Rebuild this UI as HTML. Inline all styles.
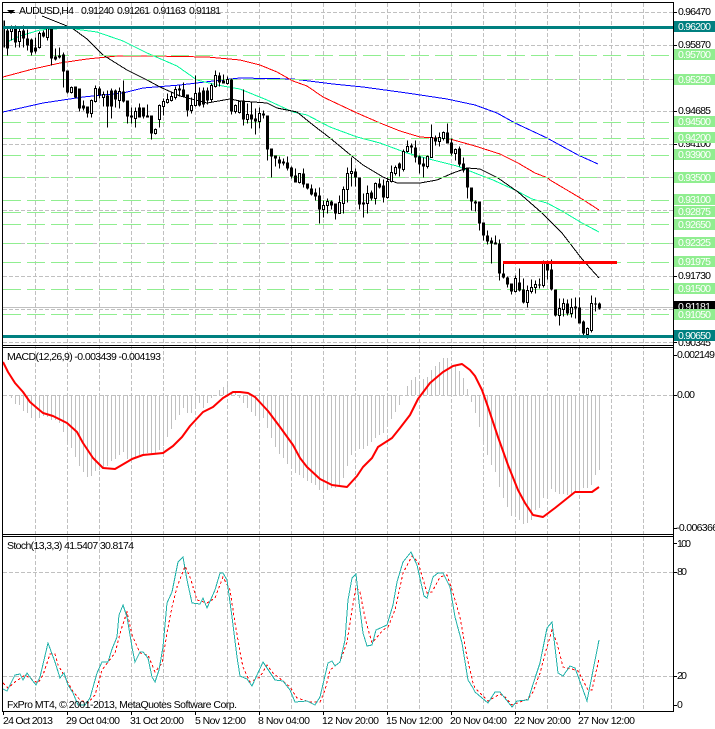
<!DOCTYPE html>
<html><head><meta charset="utf-8"><title>AUDUSD,H4</title>
<style>
html,body{margin:0;padding:0;background:#fff;width:715px;height:729px;overflow:hidden}
svg{display:block}
text{font-family:"Liberation Sans",sans-serif;font-size:10.5px;fill:#000}
.w{fill:#fff}
</style></head><body>
<svg width="715" height="729" viewBox="0 0 715 729" xmlns="http://www.w3.org/2000/svg">
<defs>
<clipPath id="m"><rect x="3" y="3" width="670" height="342"/></clipPath>
<clipPath id="c"><rect x="3" y="348" width="670" height="186"/></clipPath>
<clipPath id="s"><rect x="3" y="537" width="670" height="174"/></clipPath>
</defs>
<rect width="715" height="729" fill="#fff"/>
<!-- grid -->
<g stroke="#c0c0c0" stroke-width="1" stroke-dasharray="4 2" fill="none" shape-rendering="crispEdges">
<path d="M35.5 3V711M67.5 3V711M99.5 3V711M131.5 3V711M163.5 3V711M195.5 3V711M227.5 3V711M259.5 3V711M291.5 3V711M323.5 3V711M355.5 3V711M387.5 3V711M419.5 3V711M451.5 3V711M483.5 3V711M515.5 3V711M547.5 3V711M579.5 3V711M611.5 3V711M643.5 3V711"/>
<path d="M3 12.5H673M3 45.5H673M3 79.5H673M3 111.5H673M3 144.5H673M3 177.5H673M3 210.5H673M3 243.5H673M3 276.5H673M3 309.5H673M3 342.5H673M3 395.5H673M3 572.5H673M3 676.5H673"/>
</g>
<path d="M3 307.5H673" stroke="#c0c0c0" fill="none" shape-rendering="crispEdges"/>
<!-- moving averages -->
<g clip-path="url(#m)" fill="none" stroke-width="1" shape-rendering="crispEdges">
<polyline stroke="#0000ff" points="3,112 43,103 83,97 123,93 143,88 180,85 213,81 240,78 293,79 333,84 363,87 407,93 447,99 475,105 497,113 515,123 547,138 578,155 598,164"/>
<polyline stroke="#ff0000" points="3,77 33,69 60,63 87,59 117,56 153,56 207,57 240,60 260,65 277,72 293,81 307,86 323,97 340,105 357,113 380,123 400,131 420,137 450,139 475,146 500,154 518,163 535,173 548,178 550,180 582,199 599,210"/>
<polyline stroke="#00fa9a" points="7,42 20,36 40,30 67,28 97,32 123,41 147,53 177,66 197,80 217,85 240,89 267,100 293,112 307,115 330,127 357,137 380,143 407,153 433,160 457,166 480,175 493,180 515,190 532,199 547,203 562,211 582,223 599,232"/>
<polyline stroke="#000" points="42,16 57,22 72,28 87,39 103,55 127,70 147,80 160,87 180,96 207,103 230,99 240,101 267,103 277,108 297,112 313,125 330,138 353,157 363,165 383,177 397,183 420,183 437,180 453,173 467,168 480,169 498,178 518,192 542,213 562,233 582,259 599,278"/>
</g>
<!-- horizontal levels -->
<path d="M3 55.5H673M3 79.5H673M3 122.5H673M3 138.5H673M3 155.5H673M3 177.5H673M3 200.5H673M3 212.5H673M3 224.5H673M3 243.5H673M3 262.5H673M3 289.5H673M3 314.5H673" stroke="#90ee90" stroke-dasharray="18 6" fill="none" shape-rendering="crispEdges"/>
<!-- candles -->
<g clip-path="url(#m)" transform="translate(.5 .5)" shape-rendering="crispEdges">
<path fill="none" stroke="#000" d="M3 20V47M7 28V55M11 25V40M15 25V47M19 26V47M23 25V47M27 29V50M31 38V55M35 37V53M39 31V48M43 30V37M47 27V40M51 27V65M55 48V60M59 47V58M63 52V87M67 70V93M71 86V93M75 86V98M79 88V111M83 100V110M87 106V117M91 99V117M95 85V102M99 86V98M103 91V106M107 90V127M111 88V118M115 89V107M119 87V108M123 80V102M127 100V123M131 107V123M135 107V127M139 103V117M143 107V118M147 104V117M151 115V139M155 128V134M159 104V127M163 98V115M167 93V103M171 91V101M175 86V99M179 85V96M183 82V97M187 94V116M191 97V113M195 75V106M199 87V106M203 87V107M207 87V104M211 83V101M215 70V87M219 72V86M223 74V83M227 76V84M231 78V114M235 104V113M239 100V113M243 89V125M247 103V123M251 101V128M255 108V134M259 107V128M263 110V118M267 115V160M271 148V177M275 155V166M279 156V168M283 158V165M287 156V170M291 166V178M295 168V182M299 173V183M303 168V187M307 183V189M311 184V195M315 188V200M319 187V223M323 200V217M327 198V213M331 200V209M335 203V219M339 195V213M343 186V213M347 167V202M351 157V186M355 168V186M359 177V209M363 193V217M367 185V213M371 190V200M375 182V204M379 178V188M383 179V202M387 177V198M391 165V182M395 165V175M399 162V176M403 149V171M407 140V152M411 143V153M415 140V162M419 155V173M423 157V177M427 155V168M431 124V157M435 135V145M439 132V146M443 131V140M447 123V143M451 138V155M455 148V160M459 146V166M463 157V172M467 167V198M471 187V210M475 200V211M479 201V230M483 222V240M487 230V244M491 237V263M495 235V244M499 239V280M503 262V278M507 276V287M511 283V294M515 275V292M519 268V291M523 278V303M527 285V307M531 279V293M535 280V293M539 278V288M543 260V287M547 260V279M551 259V290M555 289V316M559 298V325M563 298V316M567 299V315M571 298V317M575 297V318M579 297V323M583 320V337M587 327V338M591 295V332M595 297V311M599 302V309"/>
<path fill="none" stroke="#000" stroke-width="3" d="M3 20V47M7 30V48M15 27V42M23 30V38M27 38V45M31 39V52M35 47V51M43 32V36M51 28V58M55 56V59M59 55V57M63 54V71M67 70V92M75 86V97M79 88V108M83 105V108M87 106V113M99 88V95M107 95V106M111 90V106M115 90V99M123 91V101M127 100V116M131 115V117M139 107V117M143 107V116M147 115V117M151 115V133M179 88V90M183 89V96M187 94V110M199 92V105M203 90V104M207 90V100M219 75V82M223 80V83M231 79V111M243 100V119M251 114V119M255 118V121M263 113V115M267 115V149M271 148V156M275 155V158M279 159V163M283 161V163M287 162V168M291 167V176M295 175V182M303 173V184M307 183V188M311 188V194M315 192V196M319 195V209M331 201V205M335 203V213M355 171V177M359 177V204M363 202V204M371 192V198M379 183V187M383 185V197M399 163V168M411 145V147M415 147V157M419 156V164M423 163V166M435 137V141M447 132V143M451 142V153M459 148V164M463 163V170M467 168V187M471 187V201M475 201V203M479 201V223M483 222V235M487 235V241M491 240V243M495 242V244M499 243V273M503 273V277M507 277V284M511 283V291M519 282V290M523 289V302M539 284V285M547 263V270M551 269V289M555 289V315M567 303V313M575 306V308M579 307V323M583 321V333M595 303V304M599 303V308"/>
<path fill="#fff" stroke="#000" d="M10 26h2v5h-2zM18 31h2v10h-2zM38 33h2v14h-2zM46 28h2v9h-2zM70 87h2v5h-2zM90 100h2v13h-2zM94 88h2v13h-2zM102 94h2v3h-2zM118 91h2v9h-2zM134 111h2v7h-2zM154 129h2v4h-2zM158 105h2v14h-2zM162 101h2v5h-2zM166 99h2v3h-2zM170 96h2v4h-2zM174 89h2v8h-2zM190 105h2v5h-2zM194 93h2v12h-2zM210 85h2v14h-2zM214 75h2v11h-2zM226 79h2v4h-2zM234 105h2v6h-2zM238 101h2v11h-2zM246 114h2v5h-2zM258 113h2v8h-2zM298 173h2v9h-2zM322 205h2v4h-2zM326 201h2v4h-2zM338 202h2v11h-2zM342 189h2v14h-2zM346 173h2v16h-2zM350 171h2v2h-2zM366 193h2v10h-2zM374 183h2v15h-2zM386 181h2v16h-2zM390 172h2v9h-2zM394 167h2v6h-2zM402 151h2v18h-2zM406 146h2v5h-2zM426 156h2v10h-2zM430 137h2v20h-2zM438 137h2v4h-2zM442 132h2v6h-2zM454 149h2v4h-2zM514 278h2v13h-2zM526 290h2v12h-2zM530 287h2v4h-2zM534 284h2v3h-2zM542 263h2v22h-2zM558 308h2v7h-2zM562 303h2v6h-2zM570 307h2v6h-2zM586 328h2v6h-2zM590 303h2v27h-2z"/>
</g>
<!-- thick lines -->
<g shape-rendering="crispEdges">
<rect x="3" y="26" width="670" height="3" fill="#008080"/>
<rect x="3" y="335" width="670" height="3" fill="#008080"/>
<rect x="503" y="261" width="114" height="3" fill="#ff0000"/>
</g>
<!-- MACD -->
<g clip-path="url(#c)" transform="translate(.5 0)" shape-rendering="crispEdges">
<path fill="none" stroke="#c0c0c0" d="M11 395V398M15 395V404M19 395V405M23 395V411M27 395V413M31 395V418M35 395V417M39 395V418M43 395V416M47 395V417M51 395V420M55 395V420M59 395V423M63 395V432M67 395V442M71 395V448M75 395V457M79 395V466M83 395V472M87 395V477M91 395V476M95 395V471M99 395V470M103 395V469M107 395V466M111 395V461M115 395V459M119 395V455M123 395V452M127 395V459M131 395V458M135 395V457M139 395V455M143 395V454M147 395V453M151 395V454M155 395V453M159 395V450M163 395V446M167 395V437M171 395V429M175 395V420M179 395V415M183 395V408M187 395V413M191 395V413M195 395V408M199 395V403M203 395V408M207 395V403M211 395V398M219 395V390M223 395V387M227 395V381M231 395V392M235 395V393M239 395V398M243 395V403M247 395V408M251 395V412M255 395V416M259 395V418M263 395V418M267 395V428M271 395V438M275 395V447M279 395V454M283 395V458M287 395V464M291 395V468M295 395V473M299 395V475M303 395V478M307 395V481M311 395V483M315 395V485M319 395V490M323 395V490M327 395V490M331 395V488M335 395V488M339 395V487M343 395V478M347 395V466M351 395V455M355 395V449M359 395V449M363 395V449M367 395V446M371 395V442M375 395V438M379 395V435M383 395V433M387 395V427M391 395V419M395 395V412M399 395V405M407 395V386M411 395V380M415 395V377M419 395V385M423 395V379M427 395V377M431 395V370M435 395V366M439 395V362M443 395V358M447 395V358M451 395V363M455 395V365M459 395V371M463 395V378M467 395V389M471 395V402M475 395V413M479 395V427M483 395V443M487 395V455M491 395V465M495 395V472M499 395V487M503 395V498M507 395V507M511 395V516M515 395V517M519 395V520M523 395V524M527 395V523M531 395V520M535 395V510M539 395V508M543 395V498M547 395V495M551 395V489M555 395V492M559 395V494M563 395V494M567 395V495M571 395V495M575 395V492M579 395V490M583 395V488M587 395V488M591 395V485M595 395V475M599 395V470"/>
</g>
<polyline clip-path="url(#c)" fill="none" stroke="#ff0000" stroke-width="2" stroke-linejoin="round" points="3,362 8,372 15,383 23,392 30,402 37,408 43,413 53,416 67,423 77,432 83,443 93,458 103,468 115,469 127,462 132,459 143,455 163,453 173,446 182,437 190,426 203,412 213,407 223,398 233,392 240,392 248,393 255,397 268,411 280,427 293,445 300,458 307,467 320,479 332,485 347,487 357,476 363,467 372,458 378,447 392,438 400,428 410,415 418,399 430,383 443,372 453,366 462,364 470,370 475,376 482,390 488,407 498,437 508,465 518,490 525,503 533,515 543,517 555,508 575,492 592,492 599,487"/>
<!-- Stochastic -->
<polyline clip-path="url(#s)" fill="none" stroke="#ff0000" stroke-dasharray="2.5 2.5" shape-rendering="crispEdges" points="3,683 8,688 15,682 25,675 33,680 38,683 43,675 50,654 55,654 58,665 65,677 72,690 80,700 88,703 95,695 102,670 108,662 115,653 121,630 127,612 132,635 140,653 148,655 155,672 162,663 167,633 172,607 177,587 185,566 190,577 197,600 207,603 215,598 223,577 230,590 235,623 240,652 243,667 250,682 260,677 267,665 273,673 283,681 290,687 297,698 310,702 320,702 325,690 330,670 340,662 347,642 352,610 356,587 360,592 365,618 372,643 383,630 388,627 395,610 403,573 412,556 418,562 427,593 432,592 440,577 447,575 453,593 460,617 467,657 473,683 475,688 488,701 500,694 505,697 512,705 528,699 533,692 540,673 547,647 552,630 557,643 563,667 572,669 578,671 588,690 592,690 599,659"/>
<polyline clip-path="url(#s)" fill="none" stroke="#20b2aa" stroke-width="1" shape-rendering="crispEdges" points="3,689 7,691 15,675 20,674 23,680 27,673 32,680 36,685 40,677 48,643 55,662 60,678 64,673 68,685 73,693 78,705 85,705 90,698 97,673 102,662 108,662 112,649 117,637 119,615 123,605 127,617 132,647 135,662 140,652 143,652 148,658 152,677 155,682 159,670 163,647 167,603 172,592 178,562 183,557 187,580 192,603 200,604 203,598 207,608 215,590 220,573 223,573 227,580 232,617 237,657 240,676 247,679 252,686 263,662 275,680 283,681 290,690 295,702 307,701 315,705 320,697 328,663 332,661 335,666 340,662 345,640 348,600 352,578 356,574 359,602 363,633 367,646 372,645 376,630 387,625 393,605 397,582 403,562 411,552 417,565 424,596 427,598 433,577 438,573 443,573 450,587 455,617 462,643 468,680 473,688 475,692 488,703 495,692 500,692 512,707 517,701 528,700 536,675 540,663 547,628 552,622 558,673 563,676 570,666 575,668 582,687 587,701 599,640"/>
<!-- frames -->
<g fill="none" stroke="#000" shape-rendering="crispEdges">
<path d="M2.5 2.5H673.5V711.5H2.5ZM3 345.5H673M3 347.5H673M3 534.5H673M3 536.5H673"/>
<path d="M673 12.5H677M673 45.5H677M673 79.5H677M673 111.5H677M673 144.5H677M673 211.5H677M673 243.5H677M673 276.5H677M673 342.5H677M673 355.5H677M673 395.5H677M673 528.5H677M673 543.5H677M673 572.5H677M673 676.5H677M673 705.5H677"/>
<path d="M3.5 711V715M67.5 711V715M131.5 711V715M195.5 711V715M259.5 711V715M323.5 711V715M387.5 711V715M451.5 711V715M515.5 711V715M579.5 711V715"/>
</g>
<!-- arrow icon -->
<polygon points="7,10 15,10 11,14" fill="#000"/>
<path d="M3 12.5H15" stroke="#000" fill="none" shape-rendering="crispEdges"/>
<!-- titles -->
<text x="19" y="14" textLength="55">AUDUSD,H4</text>
<text x="81" y="14" textLength="33">0.91240</text>
<text x="117" y="14" textLength="33">0.91261</text>
<text x="153" y="14" textLength="33">0.91163</text>
<text x="189" y="14" textLength="32">0.91181</text>
<text x="7" y="360" textLength="154">MACD(12,26,9) -0.003439 -0.004193</text>
<text x="7" y="549" textLength="127">Stoch(13,3,3) 41.5407 30.8174</text>
<text x="7" y="708" textLength="230">FxPro MT4, © 2001-2013, MetaQuotes Software Corp.</text>
<!-- price axis -->
<text x="678" y="15" textLength="33">0.96470</text>
<text x="678" y="48" textLength="33">0.95870</text>
<text x="678" y="114" textLength="33">0.94685</text>
<text x="678" y="147" textLength="33">0.94100</text>
<text x="678" y="279" textLength="33">0.91730</text>
<text x="678" y="346" textLength="33">0.90345</text>
<g shape-rendering="crispEdges">
<rect x="674" y="301" width="41" height="12" fill="#000"/>
</g>
<text class="w" x="678" y="310" textLength="33">0.91181</text>
<g fill="#90ee90" shape-rendering="crispEdges">
<rect x="674" y="49" width="41" height="11"/><rect x="674" y="74" width="41" height="11"/><rect x="674" y="116" width="41" height="11"/><rect x="674" y="132" width="41" height="11"/><rect x="674" y="149" width="41" height="11"/><rect x="674" y="172" width="41" height="11"/><rect x="674" y="194" width="41" height="11"/><rect x="674" y="206" width="41" height="11"/><rect x="674" y="219" width="41" height="11"/><rect x="674" y="237" width="41" height="11"/><rect x="674" y="256" width="41" height="11"/><rect x="674" y="283" width="41" height="11"/><rect x="674" y="309" width="41" height="11"/>
</g>
<g fill="#008080" shape-rendering="crispEdges">
<rect x="674" y="21" width="41" height="11"/><rect x="674" y="330" width="41" height="11"/>
</g>
<text class="w" x="678" y="30" textLength="33">0.96200</text>
<text class="w" x="678" y="58" textLength="33">0.95700</text>
<text class="w" x="678" y="83" textLength="33">0.95250</text>
<text class="w" x="678" y="125" textLength="33">0.94500</text>
<text class="w" x="678" y="141" textLength="33">0.94200</text>
<text class="w" x="678" y="158" textLength="33">0.93900</text>
<text class="w" x="678" y="181" textLength="33">0.93500</text>
<text class="w" x="678" y="203" textLength="33">0.93100</text>
<text class="w" x="678" y="215" textLength="33">0.92875</text>
<text class="w" x="678" y="228" textLength="33">0.92650</text>
<text class="w" x="678" y="246" textLength="33">0.92325</text>
<text class="w" x="678" y="265" textLength="33">0.91975</text>
<text class="w" x="678" y="292" textLength="33">0.91500</text>
<text class="w" x="678" y="318" textLength="33">0.91050</text>
<text class="w" x="678" y="339" textLength="33">0.90650</text>
<!-- MACD axis -->
<text x="677" y="358" textLength="38">0.002149</text>
<text x="677" y="398" textLength="18">0.00</text>
<text x="676" y="531" textLength="42">-0.006366</text>
<!-- Stoch axis -->
<text x="677" y="547" textLength="14">100</text>
<text x="677" y="575" textLength="10">80</text>
<text x="677" y="679" textLength="10">20</text>
<text x="677" y="708">0</text>
<!-- time axis -->
<text x="3" y="724" textLength="50">24 Oct 2013</text>
<text x="66" y="724" textLength="54">29 Oct 04:00</text>
<text x="130" y="724" textLength="54">31 Oct 20:00</text>
<text x="195" y="724" textLength="51">5 Nov 12:00</text>
<text x="258" y="724" textLength="52">8 Nov 04:00</text>
<text x="322" y="724" textLength="57">12 Nov 20:00</text>
<text x="386" y="724" textLength="57">15 Nov 12:00</text>
<text x="450" y="724" textLength="57">20 Nov 04:00</text>
<text x="514" y="724" textLength="57">22 Nov 20:00</text>
<text x="578" y="724" textLength="57">27 Nov 12:00</text>
</svg>
</body></html>
